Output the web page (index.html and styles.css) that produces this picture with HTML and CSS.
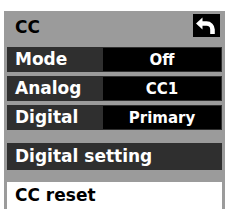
FILE: index.html
```html
<!DOCTYPE html>
<html>
<head>
<meta charset="utf-8">
<link rel="stylesheet" href="styles.css">
</head>
<body>
<div class="panel">
  <div class="header">
    <span class="title">CC</span>
    <span class="back">
      <svg width="27" height="23" viewBox="0 0 27 23">
        <rect width="27" height="23" fill="#000"/>
        <polygon points="3,9.5 9.5,3.5 9.5,15.5" fill="#fff"/>
        <path d="M8 9.5 H13.5 A6 6 0 0 1 19.5 15.5 V20" fill="none" stroke="#fff" stroke-width="4.6"/>
      </svg>
    </span>
  </div>
  <div class="row r1"><span class="label">Mode</span><span class="value">Off</span></div>
  <div class="row r2"><span class="label">Analog</span><span class="value">CC1</span></div>
  <div class="row r3"><span class="label">Digital</span><span class="value">Primary</span></div>
  <div class="item dark">Digital setting</div>
  <div class="item light">CC reset</div>
</div>
</body>
</html>
```

FILE: styles.css
```css
html, body {
  margin: 0;
  padding: 0;
  background: #fff;
}
body {
  font-family: "DejaVu Sans", sans-serif;
  font-weight: bold;
}
.panel {
  margin: 11px 0 0 4px;
  width: 221px;
  height: 198px;
  background: #9b9b9b;
  padding: 0 3px;
  box-sizing: border-box;
  display: flex;
  flex-direction: column;
}
.header {
  height: 36px;
  display: flex;
  justify-content: space-between;
  align-items: flex-start;
  padding-top: 3px;
  box-sizing: border-box;
}
.title {
  font-size: 17px;
  line-height: 23px;
  padding: 2px 0 0 8px;
  color: #000;
}
.back {
  display: block;
  width: 27px;
  height: 23px;
  margin-right: 2px;
}
.back svg {
  display: block;
}
.row {
  height: 25px;
  background: #2f2f2f;
  display: flex;
  margin-bottom: 4px;
}
.r3 {
  margin-bottom: 13px;
}
.label {
  width: 96px;
  padding-left: 8px;
  box-sizing: border-box;
  font-size: 17px;
  line-height: 25px;
  color: #fff;
}
.value {
  flex: 1;
  margin: 1px 1px 1px 0;
  background: #000;
  color: #fff;
  font-size: 15px;
  line-height: 23px;
  padding-top: 1px;
  box-sizing: border-box;
  text-align: center;
}
.item {
  height: 27px;
  padding-left: 8px;
  font-size: 17px;
  line-height: 27px;
}
.dark {
  background: #2f2f2f;
  color: #fff;
  margin-bottom: 12px;
}
.light {
  background: #fff;
  color: #000;
}
```
